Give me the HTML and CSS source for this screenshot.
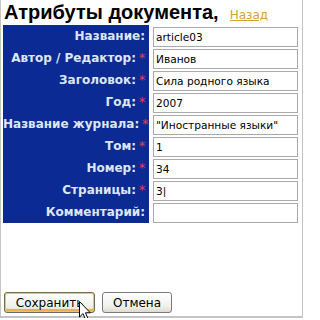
FILE: index.html
```html
<!DOCTYPE html>
<html lang="ru">
<head>
<meta charset="utf-8">
<link rel="stylesheet" href="styles.css">
</head>
<body>
<div class="frame">
  <div class="header">
    <h1 class="title">Атрибуты документа,</h1>
    <a class="back" href="#">Назад</a>
  </div>
  <form class="form">
    <div class="label">Название:</div>
    <div class="field"><input class="input" value="article03"></div>
    <div class="label">Автор / Редактор:<span class="req">*</span></div>
    <div class="field"><input class="input" value="Иванов"></div>
    <div class="label">Заголовок:<span class="req">*</span></div>
    <div class="field"><input class="input" value="Сила родного языка"></div>
    <div class="label">Год:<span class="req">*</span></div>
    <div class="field"><input class="input" value="2007"></div>
    <div class="label">Название журнала:<span class="req">*</span></div>
    <div class="field"><input class="input" value="&quot;Иностранные языки&quot;"></div>
    <div class="label">Том:<span class="req">*</span></div>
    <div class="field"><input class="input" value="1"></div>
    <div class="label">Номер:<span class="req">*</span></div>
    <div class="field"><input class="input" value="34"></div>
    <div class="label">Страницы:<span class="req">*</span></div>
    <div class="field"><input class="input" value="3|"></div>
    <div class="label">Комментарий:</div>
    <div class="field"><input class="input" value=""></div>
  </form>
  <div class="buttons">
    <button class="btn btn-default" type="button">Сохранить</button>
    <button class="btn" type="button">Отмена</button>
    <svg class="cursor" width="13" height="20" viewBox="0 0 13 20">
      <path d="M0.5 0.5 L0.5 16 L4 12.6 L6.6 18.6 L9 17.6 L6.5 11.8 L11.3 11.8 Z" fill="#fff" stroke="#000" stroke-width="1" stroke-linejoin="miter"/>
    </svg>
  </div>
</div>
</body>
</html>
```
FILE: styles.css
```css
html, body {
  margin: 0;
  padding: 0;
  background: #fff;
}
.frame {
  position: relative;
  width: 301px;
  height: 316px;
  border-left: 1px solid #c4c4c4;
  border-right: 1px solid #c4c4c4;
  border-bottom: 2px solid #c4c4c4;
  font-family: "DejaVu Sans", Verdana, sans-serif;
}
.header {
  display: flex;
  align-items: baseline;
  height: 25px;
  padding-left: 3px;
  white-space: nowrap;
}
.title {
  flex: none;
  margin: 0;
  font-family: "Liberation Sans", Arial, sans-serif;
  font-size: 20px;
  font-weight: bold;
  line-height: 24px;
  color: #000;
  white-space: nowrap;
}
.back {
  flex: none;
  margin-left: 11px;
  font-size: 12px;
  color: #d4a22c;
  text-decoration: underline;
}
.form {
  display: grid;
  grid-template-columns: 146px 151px;
  grid-auto-rows: 22px;
  margin: 0 0 0 2px;
}
.label {
  background: #0b2a94;
  color: #dde6f6;
  font-size: 12px;
  font-weight: bold;
  text-align: right;
  line-height: 22px;
  padding-right: 4px;
  white-space: nowrap;
}
.req {
  color: #e8404c;
  font-weight: normal;
  margin-left: 3px;
}
.field {
  padding: 1px 2px 1px 4px;
}
.input {
  box-sizing: border-box;
  width: 145px;
  height: 20px;
  margin: 0;
  padding: 0 2px;
  border: 1px solid #a9a9a9;
  font-family: "DejaVu Sans", Verdana, sans-serif;
  font-size: 10.6px;
  color: #000;
  background: #fff;
  outline: none;
}
.buttons {
  position: relative;
  display: flex;
  gap: 7px;
  margin-top: 69px;
  padding-left: 3px;
}
.btn {
  height: 21px;
  padding: 0 10px;
  border: 1px solid #7a7a7a;
  border-radius: 3px;
  background: linear-gradient(#ffffff, #f1f1ea 70%, #dedbcf);
  font-family: "DejaVu Sans", Verdana, sans-serif;
  font-size: 12px;
  color: #000;
}
.btn-default {
  width: 91px;
  border-color: #6e6a5c;
  box-shadow: inset 0 0 0 1px #f6c25a, inset 0 -2px 0 1px #eeb046;
}
.cursor {
  position: absolute;
  left: 78px;
  top: 9px;
}
```
